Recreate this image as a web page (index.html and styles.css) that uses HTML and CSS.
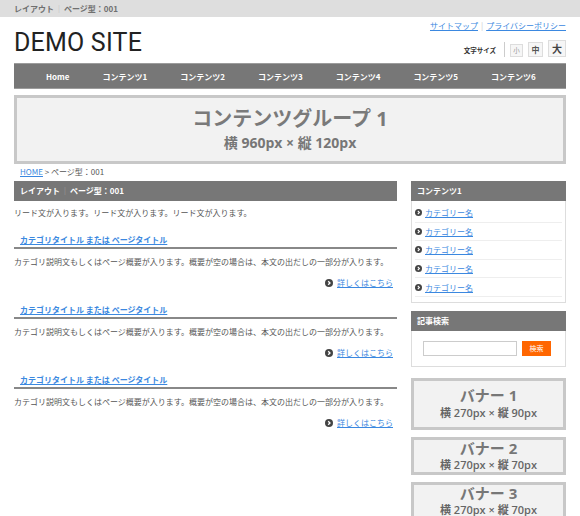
FILE: index.html
```html
<!DOCTYPE html>
<html lang="ja">
<head>
<meta charset="utf-8">
<title>DEMO SITE</title>
<link rel="stylesheet" href="styles.css">
</head>
<body>
<div class="topbar"><div class="wrap">レイアウト<span class="bar">｜</span>ページ型：001</div></div>
<header class="wrap header">
  <div class="logo">DEMO SITE</div>
  <div class="hright">
    <div class="hlinks"><a href="#">サイトマップ</a><span class="sep">|</span><a href="#">プライバシーポリシー</a></div>
    <div class="fsize">
      <span class="fslabel">文字サイズ</span>
      <span class="vsep"></span>
      <span class="fbtn s">小</span>
      <span class="fbtn m">中</span>
      <span class="fbtn l">大</span>
    </div>
  </div>
</header>
<nav class="wrap gnav">
  <span>Home</span><span>コンテンツ1</span><span>コンテンツ2</span><span>コンテンツ3</span><span>コンテンツ4</span><span>コンテンツ5</span><span>コンテンツ6</span>
</nav>
<div class="wrap visual">
  <div class="vtitle">コンテンツグループ 1</div>
  <div class="vsub">横 960px × 縦 120px</div>
</div>
<div class="wrap crumb"><a href="#">HOME</a> &gt; ページ型：001</div>
<div class="wrap columns">
  <main class="main">
    <div class="hbar">レイアウト<span class="bar">｜</span>ページ型：001</div>
    <p class="lead">リード文が入ります。リード文が入ります。リード文が入ります。</p>
    <section class="art">
      <h3><a href="#">カテゴリタイトル または ページタイトル</a></h3>
      <p>カテゴリ説明文もしくはページ概要が入ります。概要が空の場合は、本文の出だしの一部分が入ります。</p>
      <div class="more"><svg class="ic" viewBox="0 0 8 8" width="8" height="8"><circle cx="4" cy="4" r="4" fill="#444"/><path d="M3.2 2.2 L5 4 L3.2 5.8" stroke="#fff" stroke-width="1.3" fill="none"/></svg><a href="#">詳しくはこちら</a></div>
    </section>
    <section class="art">
      <h3><a href="#">カテゴリタイトル または ページタイトル</a></h3>
      <p>カテゴリ説明文もしくはページ概要が入ります。概要が空の場合は、本文の出だしの一部分が入ります。</p>
      <div class="more"><svg class="ic" viewBox="0 0 8 8" width="8" height="8"><circle cx="4" cy="4" r="4" fill="#444"/><path d="M3.2 2.2 L5 4 L3.2 5.8" stroke="#fff" stroke-width="1.3" fill="none"/></svg><a href="#">詳しくはこちら</a></div>
    </section>
    <section class="art">
      <h3><a href="#">カテゴリタイトル または ページタイトル</a></h3>
      <p>カテゴリ説明文もしくはページ概要が入ります。概要が空の場合は、本文の出だしの一部分が入ります。</p>
      <div class="more"><svg class="ic" viewBox="0 0 8 8" width="8" height="8"><circle cx="4" cy="4" r="4" fill="#444"/><path d="M3.2 2.2 L5 4 L3.2 5.8" stroke="#fff" stroke-width="1.3" fill="none"/></svg><a href="#">詳しくはこちら</a></div>
    </section>
  </main>
  <aside class="side">
    <div class="sbox">
      <div class="hbar">コンテンツ1</div>
      <ul class="sbody catlist">
        <li><svg class="ic" viewBox="0 0 8 8" width="7" height="7"><circle cx="4" cy="4" r="4" fill="#444"/><path d="M3.2 2.2 L5 4 L3.2 5.8" stroke="#fff" stroke-width="1.3" fill="none"/></svg><a href="#">カテゴリー名</a></li>
        <li><svg class="ic" viewBox="0 0 8 8" width="7" height="7"><circle cx="4" cy="4" r="4" fill="#444"/><path d="M3.2 2.2 L5 4 L3.2 5.8" stroke="#fff" stroke-width="1.3" fill="none"/></svg><a href="#">カテゴリー名</a></li>
        <li><svg class="ic" viewBox="0 0 8 8" width="7" height="7"><circle cx="4" cy="4" r="4" fill="#444"/><path d="M3.2 2.2 L5 4 L3.2 5.8" stroke="#fff" stroke-width="1.3" fill="none"/></svg><a href="#">カテゴリー名</a></li>
        <li><svg class="ic" viewBox="0 0 8 8" width="7" height="7"><circle cx="4" cy="4" r="4" fill="#444"/><path d="M3.2 2.2 L5 4 L3.2 5.8" stroke="#fff" stroke-width="1.3" fill="none"/></svg><a href="#">カテゴリー名</a></li>
        <li><svg class="ic" viewBox="0 0 8 8" width="7" height="7"><circle cx="4" cy="4" r="4" fill="#444"/><path d="M3.2 2.2 L5 4 L3.2 5.8" stroke="#fff" stroke-width="1.3" fill="none"/></svg><a href="#">カテゴリー名</a></li>
      </ul>
    </div>
    <div class="sbox search">
      <div class="hbar">記事検索</div>
      <div class="sbody sform">
        <input class="sinput" type="text">
        <button class="sbtn" type="button">検索</button>
      </div>
    </div>
    <div class="banner b1">
      <div class="btitle">バナー 1</div>
      <div class="bsub">横 270px × 縦 90px</div>
    </div>
    <div class="banner">
      <div class="btitle">バナー 2</div>
      <div class="bsub">横 270px × 縦 70px</div>
    </div>
    <div class="banner">
      <div class="btitle">バナー 3</div>
      <div class="bsub">横 270px × 縦 70px</div>
    </div>
  </aside>
</div>
</body>
</html>
```

FILE: styles.css
```css
* { box-sizing: border-box; }
body {
  margin: 0;
  font-family: "Noto Sans CJK JP", "Noto Sans", sans-serif;
  font-size: 8px;
  color: #555;
  background: #fff;
}
a { color: #3b88e0; text-decoration: underline; }
.wrap { width: 552px; margin: 0 auto; }

.topbar { background: #dedede; height: 17px; }
.topbar .wrap { line-height: 17px; font-weight: bold; color: #707070; }
.bar { color: #bbb; font-weight: normal; margin: 0 1px; }

.header { height: 46px; display: flex; justify-content: space-between; align-items: flex-start; }
.logo {
  font-family: Roboto, "Liberation Sans", sans-serif;
  font-size: 25px;
  line-height: 25px;
  margin-top: 13px;
  color: #222;
  letter-spacing: 0.2px;
}
.hright { display: flex; flex-direction: column; align-items: flex-end; }
.hlinks { margin-top: 3px; line-height: 12px; display: flex; gap: 3px; }
.hlinks .sep { color: #ccc; }
.fsize { margin-top: 8px; display: flex; align-items: flex-end; height: 17px; }
.fslabel { font-size: 6.5px; font-weight: bold; color: #333; line-height: 14px; margin-right: 8px; }
.vsep { width: 1px; height: 15px; background: #ccc; }
.fbtn {
  border: 1px solid #ddd;
  background: #f6f6f6;
  display: flex;
  align-items: center;
  justify-content: center;
  margin-left: 5px;
  line-height: 1;
}
.fbtn.s { width: 13px; height: 13px; font-size: 6.5px; color: #999; }
.fbtn.m { width: 15px; height: 15px; font-size: 8px; color: #555; font-weight: bold; }
.fbtn.l { width: 18px; height: 17px; font-size: 10px; color: #444; font-weight: bold; }

.gnav {
  background: #777;
  height: 26px;
  border-top: 1px solid #9c9c9c;
  border-bottom: 1px solid #9c9c9c;
  display: flex;
  align-items: center;
  padding-left: 32px;
  gap: 33px;
}
.gnav span { color: #fff; font-weight: bold; font-size: 8px; }

.visual {
  margin-top: 6px;
  height: 69px;
  border: 3px solid #c8c8c8;
  background: #f2f2f2;
  text-align: center;
}
.vtitle {
  font-family: "Open Sans", "Noto Sans CJK JP", sans-serif;
  font-weight: bold;
  font-size: 20px;
  line-height: 24px;
  color: #7a7a7a;
  padding-top: 9px;
}
.vsub {
  font-family: "Open Sans", "Noto Sans CJK JP", sans-serif;
  font-weight: bold;
  font-size: 14px;
  line-height: 16px;
  margin-top: 4px;
  color: #777;
}

.crumb { padding: 2px 6px 3px; line-height: 12px; color: #555; }

.columns { display: flex; justify-content: space-between; align-items: flex-start; }
.main { width: 383px; }
.side { width: 155px; }

.hbar {
  background: #777;
  color: #fff;
  font-weight: bold;
  height: 20px;
  line-height: 20px;
  padding-left: 6px;
}
.hbar .bar { color: #aaa; }
.lead { margin: 6px 0 0; line-height: 12px; }
.art h3 {
  margin: 14px 0 0;
  font-size: 8px;
  line-height: 14px;
  padding-left: 6px;
  border-bottom: 2px solid #888;
  font-weight: bold;
}
.art p { margin: 7px 0 0; line-height: 12px; }
.art .more {
  margin-top: 9px;
  line-height: 12px;
  display: flex;
  justify-content: flex-end;
  align-items: center;
  gap: 4px;
  padding-right: 4px;
}
.ic { display: block; flex: none; }

.sbody { border: 1px solid #ddd; border-top: none; }
.catlist { list-style: none; margin: 0; padding: 3px 3px 5px 3px; }
.catlist li {
  height: 18.6px;
  border-bottom: 1px solid #eee;
  display: flex;
  align-items: center;
  gap: 3px;
}
.search { margin-top: 8px; }
.sform { display: flex; gap: 5px; padding: 10px 0 10px 11px; }
.sinput { width: 94px; height: 15px; border: 1px solid #ccc; margin: 0; padding: 0; background: #fff; }
.sbtn {
  width: 29px;
  height: 15px;
  border: none;
  background: #ff6600;
  color: #fff;
  font-family: "Noto Sans CJK JP", sans-serif;
  font-size: 7px;
  padding: 0;
  margin: 0;
}

.banner {
  border: 3px solid #c8c8c8;
  background: #f2f2f2;
  display: flex;
  flex-direction: column;
  align-items: center;
  justify-content: center;
  gap: 1px;
  height: 38px;
  margin-top: 7px;
}
.banner.b1 { height: 52px; margin-top: 11px; gap: 2px; }
.btitle {
  font-family: "Open Sans", "Noto Sans CJK JP", sans-serif;
  font-weight: bold;
  font-size: 15px;
  line-height: 17px;
  color: #777;
}
.bsub {
  font-family: "Open Sans", "Noto Sans CJK JP", sans-serif;
  font-weight: 600;
  font-size: 11px;
  line-height: 14px;
  color: #666;
}
```
